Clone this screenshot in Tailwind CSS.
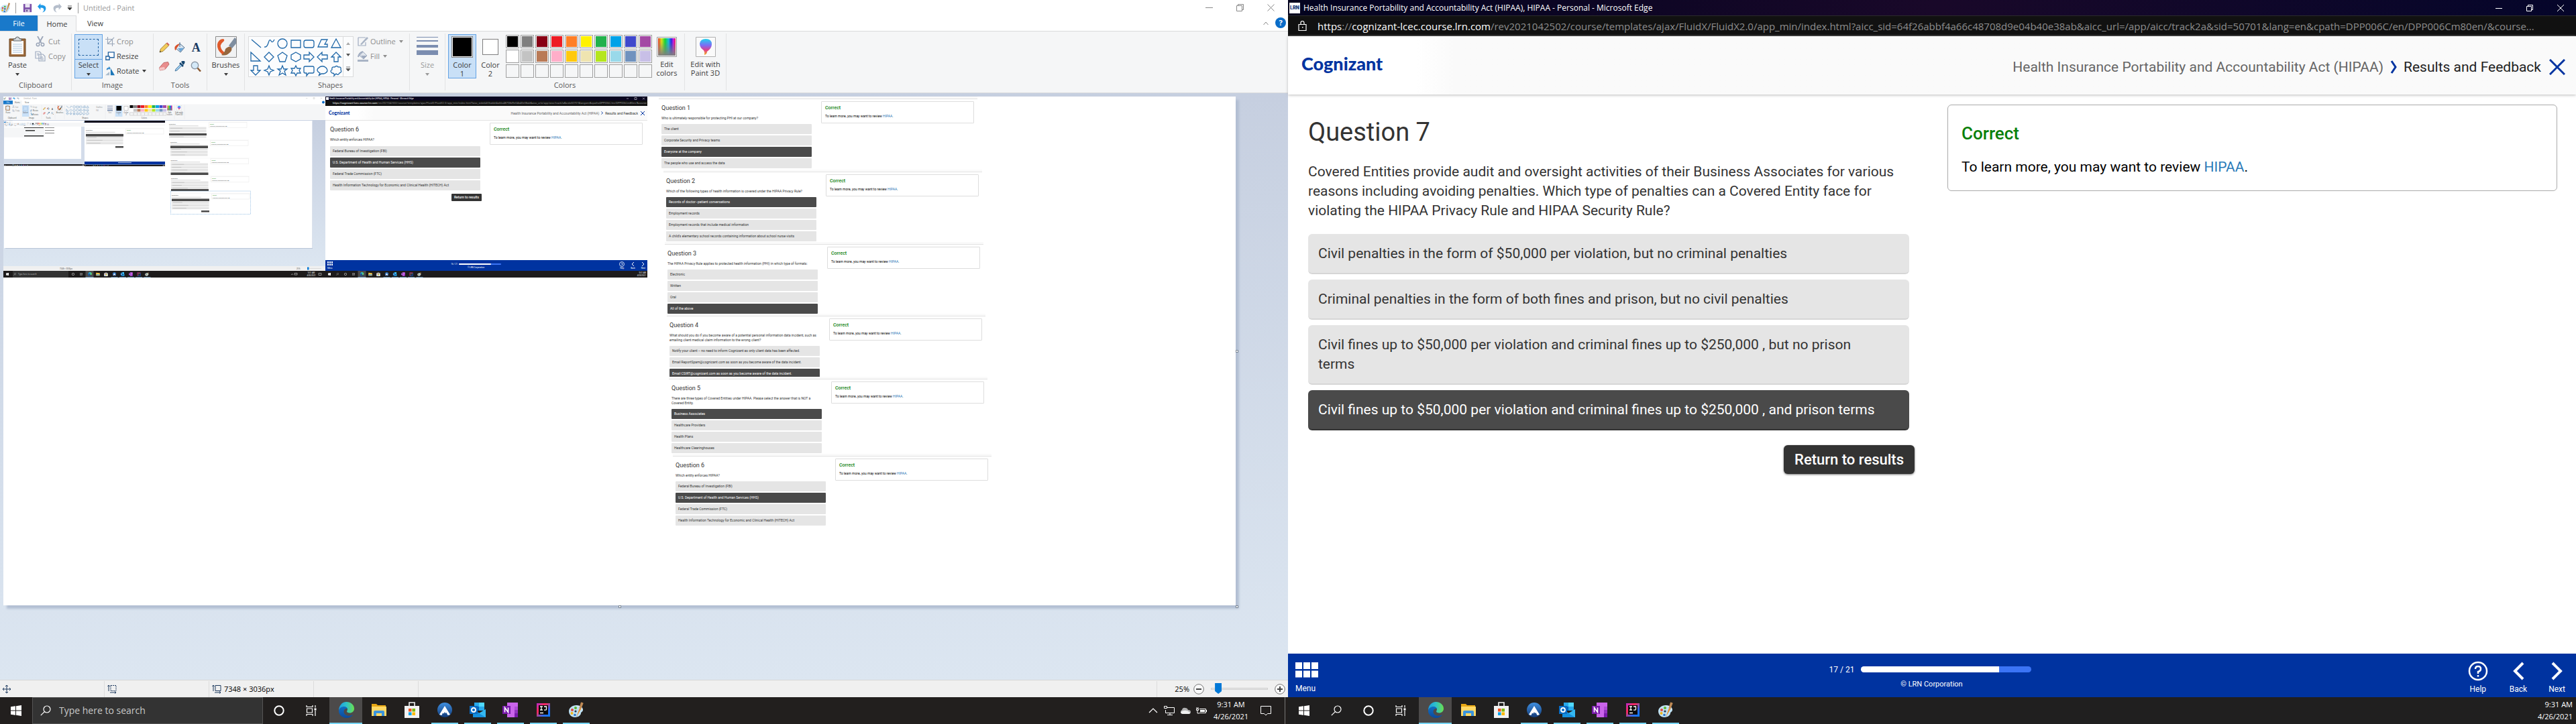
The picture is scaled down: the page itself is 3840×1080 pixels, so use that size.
<!DOCTYPE html>
<html lang="en">
<head>
<meta charset="utf-8">
<title>Desktop</title>
<script src="https://cdn.jsdelivr.net/npm/@tailwindcss/browser@4"></script>
</head>
<body class="flex h-screen min-h-[720px] overflow-hidden bg-white font-['Open_Sans',sans-serif] text-[11px] leading-4 text-[#3c3c3c]">

<!-- shared icons -->
<svg class="absolute h-0 w-0" aria-hidden="true">
  <defs>
    <linearGradient id="gEdge" x1="0" y1="0" x2="1" y2="0"><stop offset="0" stop-color="#1b9de2"/><stop offset=".5" stop-color="#2fc2c9"/><stop offset="1" stop-color="#6be04a"/></linearGradient>
    <linearGradient id="gEdge2" x1="0" y1="0" x2="0" y2="1"><stop offset="0" stop-color="#0f6fc4"/><stop offset="1" stop-color="#0d4a9b"/></linearGradient>
    <linearGradient id="gNord" x1="0" y1="0" x2="0" y2="1"><stop offset="0" stop-color="#3f8fe0"/><stop offset="1" stop-color="#123a78"/></linearGradient>
    <linearGradient id="gIj" x1="0" y1="0" x2="1" y2="1"><stop offset="0" stop-color="#b32bd0"/><stop offset=".35" stop-color="#fe2857"/><stop offset=".7" stop-color="#2a6cf5"/><stop offset="1" stop-color="#0a7cff"/></linearGradient>
    <linearGradient id="gRain" x1="0" y1="0" x2="1" y2="0"><stop offset="0" stop-color="#e0392a"/><stop offset=".2" stop-color="#d8e01c"/><stop offset=".4" stop-color="#17d436"/><stop offset=".6" stop-color="#17b8e0"/><stop offset=".75" stop-color="#2a2ae0"/><stop offset=".9" stop-color="#d81cd8"/><stop offset="1" stop-color="#e01c3a"/></linearGradient>
    <linearGradient id="gFade" x1="0" y1="0" x2="0" y2="1"><stop offset=".2" stop-color="#808080" stop-opacity="0"/><stop offset="1" stop-color="#808080"/></linearGradient>
    <linearGradient id="gDrop" x1="0" y1="0" x2="0" y2="1"><stop offset="0" stop-color="#22d3ee"/><stop offset=".4" stop-color="#7c6cf5"/><stop offset=".7" stop-color="#e0408a"/><stop offset="1" stop-color="#f5b51c"/></linearGradient>
    <linearGradient id="gBack" x1="0" y1="0" x2="0" y2="1"><stop offset="0" stop-color="#c6cfe0"/><stop offset="1" stop-color="#dce6f1"/></linearGradient>
    <symbol id="i-win" viewBox="0 0 16 16"><path d="M0 2.3 7 1.3v6.3H0zM8 1.2 16 0v7.6H8zM0 8.4h7v6.3L0 13.7zM8 8.4h8V16l-8-1.2z" fill="#fff"/></symbol>
    <symbol id="i-search" viewBox="0 0 16 16"><circle cx="10" cy="6" r="5" fill="none" stroke="#fff" stroke-width="1.2"/><path d="M6.4 9.6.8 15.2" stroke="#fff" stroke-width="1.2"/></symbol>
    <symbol id="i-cortana" viewBox="0 0 16 16"><circle cx="8" cy="8" r="6.7" fill="none" stroke="#fff" stroke-width="2"/></symbol>
    <symbol id="i-task" viewBox="0 0 16 16"><path d="M1 0v2.500h9V0M1 16v-2.500h9V16M1.500 5h8v6h-8zM14 0v3.500M14 8v8" fill="none" stroke="#fff" stroke-width="1.200"/><path d="M12.500 4.500h3v3h-3z" fill="#fff"/></symbol>
    <symbol id="i-edge" viewBox="0 0 24 24"><path d="M1 13C1 5.500 6 0 12.500 0 19 0 24 4.500 24 10c0 4-3 6.500-6.500 6.500-3 0-4.500-1.200-4.500-2.300 0-.9 1-1.300 1-3C14 9 12 7.500 9.300 7.500 5 7.500 2 10 1 13z" fill="url(#gEdge)"/><path d="M1 13c.5-3.500 4-6 8-6 2.500 0 4.500 1.500 4.800 3.200C11 9 8.500 11.500 8.500 14.500c0 4 4 6.500 8 6.300 2 0 4-.8 4.700-1.200.4-.2.7.1.400.5C19.700 22.500 16.500 24 13 24 6 24 .5 19 1 13z" fill="url(#gEdge2)"/></symbol>
    <symbol id="i-folder" viewBox="0 0 24 24"><path d="M1 3h7l2 2h12v4H1z" fill="#e8a713"/><path d="M1 7h22v14H1z" fill="#ffd866"/><path d="M4 21v-6q0-2 2-2h12q2 0 2 2v6h-4v-4H8v4z" fill="#3b94dd"/></symbol>
    <symbol id="i-store" viewBox="0 0 24 24"><path d="M8 7V1h8v6" fill="none" stroke="#f2f2f2" stroke-width="1.600"/><path d="M1 6h22v18H1z" fill="#f2f2f2"/><path d="M7 10h4.500v4.500H7z" fill="#f25022"/><path d="M12.500 10H17v4.500h-4.500z" fill="#7fba00"/><path d="M7 15.500h4.500V20H7z" fill="#00a4ef"/><path d="M12.500 15.500H17V20h-4.500z" fill="#ffb900"/></symbol>
    <symbol id="i-nord" viewBox="0 0 24 24"><circle cx="12" cy="12" r="11" fill="url(#gNord)"/><path d="M4 19 12 6l8 13-3.500 1-2-4-1.500 1-1-2-1.500 2.500-1.500-1-1.500 3.500z" fill="#fff"/></symbol>
    <symbol id="i-outlook" viewBox="0 0 24 24"><path d="M7 1h15v12H7z" fill="#28a8ea"/><path d="M14 1h8v6h-8z" fill="#50d9ff"/><path d="M7 7h7v6H7z" fill="#0364b8"/><path d="M5 11l10 6 9-6v12H5z" fill="#1490df"/><path d="m24 11-10 6 10 6z" fill="#35b8f1"/><path d="M0 6h12v12H0z" fill="#0a6cc4"/><circle cx="6" cy="12" r="3" fill="none" stroke="#fff" stroke-width="1.800"/></symbol>
    <symbol id="i-onenote" viewBox="0 0 24 24"><path d="M7 1h16v22H7z" fill="#ca64ea"/><path d="M18 7h5v5h-5z" fill="#ae4bd5"/><path d="M18 12h5v5h-5z" fill="#9332bf"/><path d="M18 17h5v6h-5z" fill="#7719aa"/><path d="M0 6h12v12H0z" fill="#7719aa"/><path d="M3.500 15.500v-7l5 7v-7" fill="none" stroke="#fff" stroke-width="1.600"/></symbol>
    <symbol id="i-ij" viewBox="0 0 24 24"><path d="M2 2h20v20H2z" fill="url(#gIj)"/><path d="M5 5h14v14H5z" fill="#0b0b0b"/><path d="M7 7h4M9 7v5M7 12h4M13 7h3.500v4q0 1.200-1.500 1.200h-2M7 16.500h5" stroke="#fff" stroke-width="1.300" fill="none"/></symbol>
    <symbol id="i-paint" viewBox="0 0 24 24"><path d="M12 5c6 0 10 3 10 7 0 3-3 3-3 5s-3 6-9 6C5 23 1 19 1 14S6 5 12 5z" fill="#bfe0f2"/><path d="M12 6c5 0 9 3 9 6" stroke="#e9f6fc" fill="none"/><circle cx="6" cy="12" r="2" fill="#e2463a"/><circle cx="11" cy="9" r="2" fill="#5cb531"/><circle cx="5.500" cy="17" r="2" fill="#f0b41c"/><circle cx="10" cy="19.500" r="1.800" fill="#2d74c9"/><circle cx="11" cy="14" r="1.600" fill="#1e3550"/><path d="m12 23 5-14 2.500 1z" fill="#e88926"/><path d="M16.500 9 19 .5q5 .5 3 3L19.500 10z" fill="#c08a55"/></symbol>
    <symbol id="i-caret" viewBox="0 0 8 5"><path d="M1 0h6L4 4z" fill="currentColor"/></symbol>
    <symbol id="i-save" viewBox="0 0 16 16"><path d="M1 1h14v14H1z" fill="#7c4fa8"/><path d="M4 1h8v6H4z" fill="#e9e4f2"/><path d="M4 10h8v5H4z" fill="#cfc6e0"/><path d="M6 11h2v3H6z" fill="#56357d"/></symbol>
    <symbol id="i-undo" viewBox="0 0 16 16"><path d="M5 0v3c6-.5 10 2 9 7-.6 3-3 5-6 5.500 2-1.500 3-3.300 2.700-5C10.300 8 8.500 7.200 5 7.500V11L0 5.500z" fill="currentColor"/></symbol>
    <symbol id="i-paste" viewBox="0 0 26 32"><path d="M1 4h24v26H1z" fill="#9c6a3c" stroke="#6d4623"/><path d="M4 7h18v20H4z" fill="#fff"/><path d="M6 12h14M6 15h14M6 18h14M6 21h14M6 24h14" stroke="#a9c3dc"/><path d="M7 7V4h3q0-3 3-3t3 3h3v3z" fill="#d4d8dc" stroke="#5d6368"/></symbol>
    <symbol id="i-cut" viewBox="0 0 16 16"><path d="M4 0 9.500 10M12 0 6.500 10" stroke="#9aa5b8" stroke-width="1.800"/><circle cx="4.500" cy="12.500" r="2.200" fill="none" stroke="#9aa5b8" stroke-width="1.500"/><circle cx="11.500" cy="12.500" r="2.200" fill="none" stroke="#9aa5b8" stroke-width="1.500"/></symbol>
    <symbol id="i-copy" viewBox="0 0 16 16"><path d="M1 1h6l2 2v8H1zM6 5h6l3 3v7H6z" fill="#f5f6f7" stroke="#9fabc0" stroke-width="1.200"/><path d="M3 4h3M3 6h3M8 9h4M8 11h5M8 13h5" stroke="#9fabc0"/></symbol>
    <symbol id="i-crop" viewBox="0 0 16 16"><path d="M4 0v12h12M0 4h12v12M4 12 15 1" fill="none" stroke="#9aa7b9" stroke-width="1.300"/></symbol>
    <symbol id="i-resize" viewBox="0 0 16 16"><path d="M5 1h10v9H5z" fill="#fff" stroke="#1e5f9e" stroke-width="1.500"/><path d="M1 8h6v6H1z" fill="#fff" stroke="#1e5f9e" stroke-width="1.500"/></symbol>
    <symbol id="i-rotate" viewBox="0 0 16 16"><path d="M9 3v12h7z" fill="#1b76b8"/><path d="M0 15h7V9z" fill="#a9bccd"/><path d="M2 6q0-4 4-4V0l3 3-3 3V4Q4 4 4 6z" fill="#2f86c8"/></symbol>
    <symbol id="i-pencil" viewBox="0 0 16 16"><path d="m1 15 1.500-5L11 1.500 14.500 5 6 13.500z" fill="#f3cc5a" stroke="#8b6a22" stroke-width=".8"/><path d="m11 1.500 1.300-1.200 3.400 3.400L14.500 5z" fill="#d55a55"/><path d="m1 15 .7-2.300L3.300 14.300z" fill="#333"/></symbol>
    <symbol id="i-bucket" viewBox="0 0 16 16"><path d="m8 2 7 6-6 7-7-6z" fill="#dce8f2" stroke="#4d6d8c"/><path d="m5 9 9-.5L9 14z" fill="#6aa6d8"/><path d="M8 2Q3 3 .5 7q-.5 5 1.500 5 1.500-4 3-5.500z" fill="#d9532b"/><path d="M8 0v7" stroke="#4d6d8c"/></symbol>
    <symbol id="i-eraser" viewBox="0 0 16 16"><path d="M7 2.500 13.500 1.500 15 5 9 12.500l-7.500 1.500-1-4z" fill="#ea8d8d" stroke="#b25a5a" stroke-width=".8"/><path d="m.5 10 7.500-1 1 3.500-7.500 1.500z" fill="#f7c6c6"/></symbol>
    <symbol id="i-dropper" viewBox="0 0 16 16"><path d="M10 1q4-3 5.500 0 .5 3-2.500 5z" fill="#17466f"/><path d="m8 3 5 5" stroke="#17466f" stroke-width="2.500"/><path d="M9 5 2 12l-1 3 3-1 7-7z" fill="#9cc9ea" stroke="#3b6c94" stroke-width=".8"/></symbol>
    <symbol id="i-mag" viewBox="0 0 16 16"><circle cx="6.500" cy="6.500" r="5.200" fill="#d4e9f8" stroke="#8d99a6" stroke-width="1.400"/><path d="m10.500 10.500 4.500 5" stroke="#8a5b34" stroke-width="2.500"/></symbol>
    <symbol id="i-brush" viewBox="0 0 32 32"><path d="M.5.5h31v31H.5z" fill="#f1f2f3" stroke="#8b8b8b"/><path d="M10 27Q2 20 3 12 5 4 12 4q3 2-1 5-5 4-2 10 3 5 6 5l-1 4z" fill="#df5a2b"/><path d="M15 19q5-5 9-3 2 5-3 9-5 5-12 3 5-3 6-9z" fill="#96673e"/><path d="m20 14 9-12 2 2v7l-6 7z" fill="#7f8ea0"/></symbol>
    <symbol id="i-outline" viewBox="0 0 16 16"><path d="M1 2h11M1 2v12h11V9" fill="none" stroke="#9fabc0" stroke-width="1.200"/><path d="M4 12 14 1l2 2L6 13z" fill="#a9b4c5"/></symbol>
    <symbol id="i-fill" viewBox="0 0 16 16"><path d="M0 13h16v3H0z" fill="#a9b4c5"/><path d="m8 1 6 6-5 5-6-5z" fill="#e0e5ec" stroke="#9fabc0"/><path d="m5 7 9 0-5 5z" fill="#9fabc0"/><path d="M8 1Q2 3 1 9" stroke="#9fabc0" stroke-width="2" fill="none"/></symbol>
    <symbol id="i-shapes" viewBox="0 0 140 60"><g fill="none" stroke="#1e67a8" stroke-width="1.300">
      <path d="m4 4 14 12M23 15q4 1 6-6t4-3 5-2"/><circle cx="50" cy="10" r="7"/><path d="M63 5h14v11H63z"/><rect x="82" y="5" width="15" height="11" rx="3"/><path d="M103 15h14v-4h-4l4-7h-9zM123 16l7-13 7 13z"/>
      <path d="M3 23v13h14zM30 23l7 7-7 7-7-7zM50 23l7 5-3 9h-8l-3-9zM70 23l7 4v6l-7 4-7-4v-6zM82 27h8v-4l7 7-7 7v-4h-8zM117 27h-8v-4l-7 7 7 7v-4h8zM127 37v-7h-4l7-7 7 7h-4v7z"/>
      <path d="M7 43v7H3l7 7 7-7h-4v-7zM30 43l2 5 5 2-5 2-2 5-2-5-5-2 5-2zM50 43l2 5h5l-4 3 2 6-5-3-5 3 2-6-4-3h5zM70 43l2 4h5l-2 3 2 4h-5l-2 4-2-4h-5l2-4-2-3h5zM84 44h11q2 0 2 2v6q0 2-2 2h-6l-3 4v-4h-2q-2 0-2-2v-6q0-2 2-2z"/>
      <path d="M106 54q-6-3-3-7 6-6 12-1 5 6-3 9l-4 0-4 3zM124 54q-4-3 0-5-1-5 4-4 3-3 5 0 5-1 4 4 2 4-2 5-2 4-5 1l-3 3q1-4-3-4z"/></g></symbol>
    <symbol id="i-rainbow" viewBox="0 0 30 30"><path d="M.5.5h29v29H.5z" fill="#fff" stroke="#9a9a9a"/><path d="M2 2h26v26H2z" fill="url(#gRain)"/><path d="M2 2h26v26H2z" fill="url(#gFade)"/></symbol>
    <symbol id="i-p3d" viewBox="0 0 30 30"><path d="M.5.5h29v29H.5z" fill="#fafafa" stroke="#b0b0b0"/><path d="M15 3q9 0 9 8 0 6-7 11 0 4-4 5 1-4-1-7-6-4-6-10 1-7 9-7z" fill="url(#gDrop)"/></symbol>

    <!-- pasted Paint window, quarter size -->
    <symbol id="s-ribbon" viewBox="0 0 480 35">
      <path d="M0 0h480v35H0z" fill="#fff"/><path d="M0 11.500h480v23H0z" fill="#f5f6f7"/><path d="M0 6h14v5.500H0z" fill="#1979ca"/><path d="M14 6h14v6H14z" fill="#f5f6f7"/>
      <use href="#i-paint" width="4" height="4" x="0" y="1"/><use href="#i-save" x="8" y="1" width="4" height="4"/><use href="#i-undo" x="14" y="1" width="4" height="4" color="#2094e0"/><use href="#i-undo" x="20" y="1" width="4" height="4" color="#a9b4c5"/>
      <path d="M28 13h10.500v17H28zM167 13h10.500v17H167z" fill="#c9e0f7"/><path d="M30 15h6v6h-6z" fill="none" stroke="#5b8fc5" stroke-width=".4" stroke-dasharray="1 .5"/>
      <use href="#i-paste" x="3" y="13" width="7" height="8"/><use href="#i-cut" x="13" y="13" width="4" height="4"/><use href="#i-copy" x="13" y="19" width="4" height="4"/><use href="#i-crop" x="40" y="13" width="3" height="4"/><use href="#i-resize" x="40" y="19" width="3" height="4"/><use href="#i-rotate" x="40" y="24" width="4" height="4"/>
      <use href="#i-pencil" x="59" y="16" width="4" height="4"/><use href="#i-bucket" x="65" y="16" width="4" height="4"/><use href="#i-eraser" x="59" y="23" width="4" height="4"/><use href="#i-dropper" x="65" y="23" width="4" height="4"/><use href="#i-mag" x="71" y="23" width="4" height="4"/><use href="#i-brush" x="80" y="13" width="8" height="8"/><use href="#i-shapes" x="93" y="13" width="35" height="15"/>
      <path d="M155 14h8M155 16h8" stroke="#7b8db0" stroke-width=".7"/><path d="M155 18h8v1h-8zM155 20h8v1.500h-8z" fill="#7b8db0"/>
      <path d="M168.500 14h7.500v7h-7.500z"/><path d="M180 14.500h6v6h-6z" fill="#fff" stroke="#888" stroke-width=".4"/>
      <path d="M188.500 13h5v4h-5z"/><path d="M194 13h5v4h-5z" fill="#7f7f7f"/><path d="M199.500 13h5v4h-5z" fill="#880015"/><path d="M205 13h5v4h-5z" fill="#ed1c24"/><path d="M210.500 13h5v4h-5z" fill="#ff7f27"/><path d="M216 13h5v4h-5z" fill="#fff200"/><path d="M221.500 13h5v4h-5z" fill="#22b14c"/><path d="M227 13h5v4h-5z" fill="#00a2e8"/><path d="M232.500 13h5v4h-5z" fill="#3f48cc"/><path d="M238 13h5v4h-5z" fill="#a349a4"/>
      <path d="M188.500 18.500h5v4h-5z" fill="#fff"/><path d="M194 18.500h5v4h-5z" fill="#c3c3c3"/><path d="M199.500 18.500h5v4h-5z" fill="#b97a57"/><path d="M205 18.500h5v4h-5z" fill="#ffaec9"/><path d="M210.500 18.500h5v4h-5z" fill="#ffc90e"/><path d="M216 18.500h5v4h-5z" fill="#efe4b0"/><path d="M221.500 18.500h5v4h-5z" fill="#b5e61d"/><path d="M227 18.500h5v4h-5z" fill="#99d9ea"/><path d="M232.500 18.500h5v4h-5z" fill="#7092be"/><path d="M238 18.500h5v4h-5z" fill="#c8bfe7"/>
      <path d="M188.500 24h54.500v4h-54.500zM194 24v4M199.500 24v4M205 24v4M210.500 24v4M216 24v4M221.500 24v4M227 24v4M232.500 24v4M238 24v4" fill="none" stroke="#aaa" stroke-width=".4"/>
      <use href="#i-rainbow" x="244" y="13" width="8" height="8"/><use href="#i-p3d" x="258" y="13" width="8" height="8"/>
      <path d="M26.500 12.500v21M57 12.500v21M77 12.500v21M91 12.500v21M152 12.500v21M166 12.500v21M255 12.500v21M270 12.500v21" stroke="#dcdee0" stroke-width=".3"/>
      <path d="M451 2.500h2.500M462 1.500h2v2h-2zM473 1.500l2 2M475 1.500l-2 2" fill="none" stroke="#999" stroke-width=".3"/><circle cx="477" cy="8.500" r="2" fill="#0a6cc8"/>
      <g font-family="Open Sans, sans-serif" font-size="2.800" fill="#444" text-anchor="middle"><text x="40" y="3.800" fill="#999">Untitled - Paint</text><text x="7" y="9.600" fill="#fff">File</text><text x="21" y="9.600">Home</text><text x="35" y="9.600">View</text><text x="7" y="25">Paste</text><text x="20" y="16.500" fill="#888">Cut</text><text x="21" y="22" fill="#888">Copy</text><text x="33" y="25">Select</text><text x="47" y="16.500" fill="#888">Crop</text><text x="48" y="22">Resize</text><text x="48" y="27.500">Rotate</text><text x="73" y="19.500" font-weight="bold">A</text><text x="84" y="25">Brushes</text><text x="143" y="16.500" fill="#888">Outline</text><text x="140" y="22" fill="#888">Fill</text><text x="159" y="25" fill="#999">Size</text><text x="172" y="25">Color</text><text x="172" y="28.300">1</text><text x="183" y="25">Color</text><text x="183" y="28.300">2</text><text x="248" y="25">Edit</text><text x="248" y="28.300">colors</text><text x="262" y="25">Edit with</text><text x="262" y="28.300">Paint 3D</text><text x="13" y="33">Clipboard</text><text x="42" y="33">Image</text><text x="67" y="33">Tools</text><text x="122" y="33">Shapes</text><text x="210" y="33">Colors</text></g>
    </symbol>
    <symbol id="s-task" viewBox="0 0 480 10"><path d="M0 0h480v10H0z" fill="#1d1b1b"/><use href="#i-win" x="4" y="3" width="4" height="4"/><use href="#i-search" x="16" y="3" width="4" height="4"/><use href="#i-cortana" x="28" y="3" width="4" height="4"/><use href="#i-task" x="40" y="3" width="4" height="4"/><path d="M48.500 0h12v9.500h-12z" fill="#4c4a4a"/><use href="#i-edge" x="51.500" y="2" width="6" height="6"/><use href="#i-folder" x="64" y="2" width="6" height="6"/><use href="#i-store" x="76" y="2" width="6" height="6"/><use href="#i-nord" x="88.500" y="2" width="6" height="6"/><use href="#i-outlook" x="100.500" y="2" width="6" height="6"/><use href="#i-onenote" x="113" y="2" width="6" height="6"/><use href="#i-ij" x="125" y="2" width="6" height="6"/><use href="#i-paint" x="137" y="2" width="6" height="6"/><path d="M48.500 9.500h12M86.500 9.500h10M99 9.500h10M111 9.500h10M123 9.500h10M135.500 9.500h10" stroke="#76b9ed" stroke-width=".6"/><g font-family="Open Sans, sans-serif" font-size="2.800" fill="#fff" text-anchor="end"><text x="478" y="4">9:31 AM</text><text x="478" y="8">4/26/2021</text></g></symbol>
    <symbol id="s-q" viewBox="0 0 120 26"><path d="M0 .2h119" stroke="#eee" stroke-width=".5"/><path d="M1 8h56v3.500H1zM1 12.300h56v3.500H1zM1 16.600h56v3.500H1zM1 20.900h56v3.500H1z" fill="#e5e5e5"/><path d="M61 1h57v8H61z" fill="#fff" stroke="#ddd" stroke-width=".4"/><path d="M3 9.700h18M3 14h14M3 18.300h23M3 22.600h20M1 6.200h44" stroke="#aaa" stroke-width=".5"/><g font-family="Roboto, sans-serif"><text x="1" y="4.400" font-size="2.500" fill="#444">Question</text><text x="62.500" y="4.400" font-size="1.800" fill="#0a800a">Correct</text><text x="62.500" y="7.600" font-size="1.300" fill="#333">To learn more, you may want to review HIPAA.</text></g></symbol>
  </defs>
</svg>

<!-- left screen: Paint -->
<main class="flex min-w-0 flex-1 flex-col bg-white">
  <header class="flex h-[23px] shrink-0 items-center text-[#999]">
    <svg class="h-4 w-4"><use href="#i-paint"/></svg>
    <span class="ml-[7px] h-4 w-px bg-[#999]"></span>
    <button aria-label="Save" class="ml-2.5"><svg class="h-[14px] w-[14px]"><use href="#i-save"/></svg></button>
    <button aria-label="Undo" class="ml-2 text-[#1f9ae8]"><svg class="h-[14px] w-[14px]"><use href="#i-undo"/></svg></button>
    <button aria-label="Redo" class="ml-2 -scale-x-100 text-[#b5becb]"><svg class="h-[14px] w-[14px]"><use href="#i-undo"/></svg></button>
    <svg class="ml-2 h-2 w-2" viewBox="0 0 8 8"><path d="M1 1h6M1 3.500h6L4 7z" fill="#333" stroke="#333" stroke-width=".8"/></svg>
    <span class="ml-2 h-4 w-px bg-[#999]"></span>
    <h1 class="ml-[7px] flex-1">Untitled - Paint</h1>
    <div class="flex items-center gap-[35px] pr-5">
      <button aria-label="Minimize"><svg class="h-[11px] w-[11px]" viewBox="0 0 11 11"><path d="M0 5.500h11" stroke="#888"/></svg></button>
      <button aria-label="Restore"><svg class="h-[11px] w-[11px]" viewBox="0 0 11 11"><path d="M.5 2.500h8v8h-8zM2.500 2V.5h8v8H9" fill="none" stroke="#888"/></svg></button>
      <button aria-label="Close"><svg class="h-[11px] w-[11px]" viewBox="0 0 11 11"><path d="m.5.500 10 10m0-10-10 10" stroke="#888"/></svg></button>
    </div>
  </header>
  <nav class="flex h-6 shrink-0 items-stretch border-b border-[#dadbdc]">
    <button class="w-14 bg-[#1979ca] text-white">File</button>
    <button class="-mb-px w-[58px] border border-b-0 border-[#dadbdc] bg-[#f5f6f7]">Home</button>
    <button class="w-14">View</button>
    <span class="flex-1"></span>
    <button aria-label="Collapse the ribbon" class="mr-2.5"><svg class="h-2 w-2" viewBox="0 0 8 8"><path d="m.5 6 3.500-4 3.500 4" fill="none" stroke="#888"/></svg></button>
    <button aria-label="Help" class="mr-[3px] mt-[3px] h-4 w-4 rounded-full bg-[#0a6cc8] font-bold text-white">?</button>
  </nav>

  <section aria-label="Ribbon" class="flex h-[92px] shrink-0 border-b border-[#dadbdc] bg-[#f5f6f7] py-[3px] text-center">
    <div class="flex w-[107px] flex-col border-r border-[#e2e3e4] pt-px">
      <div class="flex flex-1">
        <button class="flex w-[52px] flex-col items-center pt-[3px]"><svg class="h-8 w-[26px]"><use href="#i-paste"/></svg><span class="mt-[3px]">Paste</span><svg class="mt-1 h-[5px] w-2"><use href="#i-caret"/></svg></button>
        <div class="flex flex-col gap-1.5 pt-[3px] text-[#8d8d8d]">
          <button class="flex items-center gap-1"><svg class="h-4 w-4"><use href="#i-cut"/></svg>Cut</button>
          <button class="flex items-center gap-1"><svg class="h-4 w-4"><use href="#i-copy"/></svg>Copy</button>
        </div>
      </div>
      <span class="text-[#5a5a5a]">Clipboard</span>
    </div>
    <div class="flex w-[122px] flex-col border-r border-[#e2e3e4] pt-px">
      <div class="flex flex-1">
        <button class="ml-1 flex h-[66px] w-[42px] flex-col items-center border border-[#62a2e4] bg-[#c9e0f7]"><span class="flex h-[37px] w-full items-center justify-center border-b border-[#62a2e4]"><span class="h-[25px] w-[30px] border border-dashed border-[#1e5f9e]"></span></span><span>Select</span><svg class="mt-1 h-[5px] w-2"><use href="#i-caret"/></svg></button>
        <div class="flex flex-col gap-1.5 pl-1 pt-[3px]">
          <button class="flex items-center gap-[3px] text-[#8d8d8d]"><svg class="h-3.5 w-3.5"><use href="#i-crop"/></svg>Crop</button>
          <button class="flex items-center gap-[3px]"><svg class="h-3.5 w-3.5"><use href="#i-resize"/></svg>Resize</button>
          <button class="flex items-center gap-[3px]"><svg class="h-3.5 w-3.5"><use href="#i-rotate"/></svg>Rotate<svg class="h-[5px] w-2"><use href="#i-caret"/></svg></button>
        </div>
      </div>
      <span class="text-[#5a5a5a]">Image</span>
    </div>
    <div class="flex w-20 flex-col border-r border-[#e2e3e4] pt-px">
      <div class="grid flex-1 grid-cols-3 content-start justify-items-center gap-y-3 px-1 pt-3">
        <button aria-label="Pencil"><svg class="h-4 w-4"><use href="#i-pencil"/></svg></button>
        <button aria-label="Fill with color"><svg class="h-4 w-4"><use href="#i-bucket"/></svg></button>
        <button aria-label="Text" class="font-['Liberation_Serif',serif] text-lg leading-4 font-bold text-[#1b3c63]">A</button>
        <button aria-label="Eraser"><svg class="h-4 w-4"><use href="#i-eraser"/></svg></button>
        <button aria-label="Color picker"><svg class="h-4 w-4"><use href="#i-dropper"/></svg></button>
        <button aria-label="Magnifier"><svg class="h-4 w-4"><use href="#i-mag"/></svg></button>
      </div>
      <span class="text-[#5a5a5a]">Tools</span>
    </div>
    <button class="flex w-14 flex-col items-center border-r border-[#e2e3e4] pt-1"><svg class="h-8 w-8"><use href="#i-brush"/></svg><span class="mt-[3px]">Brushes</span><svg class="mt-1 h-[5px] w-2"><use href="#i-caret"/></svg></button>
    <div class="flex w-[246px] flex-col border-r border-[#e2e3e4] pt-px">
      <div class="flex flex-1">
        <div class="ml-[5px] mt-[3px] flex h-[61px] w-[157px] border border-[#dadbdc] bg-[#fbfcfd]">
          <svg class="h-[60px] w-[140px]" role="img" aria-label="Shape gallery"><use href="#i-shapes"/></svg>
          <div class="flex flex-1 flex-col items-center justify-around border-l border-[#dadbdc] text-[#555]"><svg class="h-[5px] w-2 rotate-180 text-[#aaa]"><use href="#i-caret"/></svg><svg class="h-[5px] w-2"><use href="#i-caret"/></svg><svg class="h-2 w-2" viewBox="0 0 8 8"><path d="M1 1h6M1 3.500h6L4 7z" fill="#555" stroke="#555" stroke-width=".8"/></svg></div>
        </div>
        <div class="flex flex-col gap-1.5 pl-1.5 pt-[3px] text-[#8d8d8d]">
          <button class="flex items-center gap-[3px]"><svg class="h-4 w-4"><use href="#i-outline"/></svg>Outline<svg class="ml-px h-[5px] w-2"><use href="#i-caret"/></svg></button>
          <button class="flex items-center gap-[3px]"><svg class="h-4 w-4"><use href="#i-fill"/></svg>Fill<svg class="ml-px h-[5px] w-2"><use href="#i-caret"/></svg></button>
        </div>
      </div>
      <span class="pl-2.5 text-[#5a5a5a]">Shapes</span>
    </div>
    <button class="flex w-[53px] flex-col items-center border-r border-[#e2e3e4] pt-1 text-[#999]"><svg class="h-8 w-8" viewBox="0 0 32 32"><path d="M0 1h32v1H0zM0 6h32v2H0zM0 13h32v4H0zM0 21h32v7H0z" fill="#7b8db0"/></svg><span class="mt-[3px]">Size</span><svg class="mt-1 h-[5px] w-2"><use href="#i-caret"/></svg></button>
    <div class="flex w-[357px] flex-col border-r border-[#e2e3e4] pt-px">
      <div class="flex flex-1 leading-[13px]">
        <button class="ml-1 flex h-[66px] w-[42px] flex-col items-center border border-[#62a2e4] bg-[#c9e0f7] pt-0.5"><span class="mb-1 h-8 w-8 border border-[#7f7f7f] bg-black ring-1 ring-white ring-inset"></span>Color<br>1</button>
        <button class="flex h-[66px] w-[42px] flex-col items-center pt-[7px]"><span class="mb-2 h-6 w-6 border border-[#7f7f7f] bg-white"></span>Color<br>2</button>
        <div id="palette" class="ml-0.5 grid h-16 grid-cols-10 gap-0.5 pt-px"></div>
        <button class="ml-1.5 flex w-8 flex-col items-center pt-1"><svg class="mb-1 h-[30px] w-[30px] shrink-0"><use href="#i-rainbow"/></svg>Edit<br>colors</button>
      </div>
      <span class="text-[#5a5a5a]">Colors</span>
    </div>
    <button class="flex w-[62px] flex-col items-center border-r border-[#e2e3e4] pt-[5px] leading-[13px]"><svg class="mb-1 h-[30px] w-[30px]"><use href="#i-p3d"/></svg>Edit with<br>Paint 3D</button>
  </section>

  <!-- drawing surface: pasted pictures lie on it at free positions -->
  <section aria-label="Canvas" class="min-h-0 flex-1 overflow-hidden bg-linear-to-b from-[#c6cfe0] to-[#dce6f1] pt-[5px] pl-[5px]">
    <div class="relative h-[759px] w-[1837px] bg-white font-['Roboto',sans-serif] text-[#333] shadow-[5px_5px_3px_0_#b3bfd3]">
      <!-- pasted left desktop -->
      <svg class="absolute top-0 left-0 h-[270px] w-[480px]" viewBox="0 0 480 270">
        <path d="M0 35h480v218H0z" fill="url(#gBack)"/>
        <use href="#s-ribbon" width="480" height="35"/>
        <path d="M3 37h458v190H3z" fill="#b9c5d8"/><path d="M1 36h459.500v190H1z" fill="#fff"/>
        <use href="#s-ribbon" x="1" y="36" width="120" height="9"/>
        <path d="M1 45h120v57H1z" fill="#d3dcea"/><path d="M1 45h115v48H1z" fill="#fff"/><path d="M1 46h60v15H1z" fill="#f5f6f7"/><path d="M31 46h29v1H31zM31 58h29v1.500H31zM33 50h14v1.500H33z" fill="#333"/><path d="M62 46h14v1H62zM62 50h14v1H62zM62 54h14v1H62z" fill="#888"/>
        <use href="#s-task" x="1" y="101" width="120" height="2.500"/>
        <path d="M121 36h120v3H121z" fill="#0c0a1c"/><path d="M121 39h120v5H121z" fill="#fafafa"/>
        <use href="#s-q" x="122" y="44" width="119" height="32"/><path d="M123 56h56v3.500h-56zM167 74h12v2.500h-12z" fill="#4a4a4a"/>
        <path d="M121 97h120v4.500H121z" fill="#0033a0"/><path d="M171 98.700h20" stroke="#fff" stroke-width=".8"/>
        <use href="#s-task" x="121" y="101.500" width="120" height="2.500"/>
        <use href="#s-q" x="246" y="37" width="119" height="27"/><path d="M247 55h56v3h-56z" fill="#4a4a4a"/>
        <use href="#s-q" x="248" y="64" width="119" height="27"/><path d="M249 73.500h56v3.500h-56z" fill="#4a4a4a"/>
        <use href="#s-q" x="248.500" y="91" width="119" height="27"/><path d="M249.500 113.500h56v3.500h-56z" fill="#4a4a4a"/>
        <use href="#s-q" x="249" y="118" width="119" height="27"/><path d="M250 138h56v3h-56z" fill="#4a4a4a"/>
        <path d="M249.500 141h119v34.500h-119z" fill="#fff" stroke="#5b9bd5" stroke-width=".6" stroke-dasharray="1 1"/>
        <use href="#s-q" x="250" y="141.500" width="119" height="31"/><path d="M251 152.500h56v3.500h-56zM295 170h12v2.500h-12z" fill="#4a4a4a"/>
        <path d="M0 253h480v7H0z" fill="#f0f0f0"/><g font-family="Open Sans, sans-serif" font-size="2.800" fill="#444"><text x="84" y="257.500">7348 × 3036px</text><text x="437" y="257.500">25%</text></g><path d="M456 256.500h18" stroke="#ccc" stroke-width=".6"/><path d="M453 254.500h2.500v4H453z" fill="#0078d7"/>
        <path d="M0 260h480v10H0z" fill="#1d1b1b"/><path d="M14 260h83v10H14z" fill="#333"/><text x="22" y="266" font-family="Open Sans, sans-serif" font-size="3" fill="#ccc">Type here to search</text><use href="#i-win" x="4" y="263" width="4" height="4"/><use href="#i-search" x="15" y="263" width="4" height="4"/>
        <use href="#i-cortana" x="102" y="263" width="4" height="4"/><use href="#i-task" x="114" y="263" width="4" height="4"/><path d="M122.500 260h12v9.500h-12z" fill="#4c4a4a"/><use href="#i-edge" x="126" y="262" width="6" height="6"/><use href="#i-folder" x="138" y="262" width="6" height="6"/><use href="#i-store" x="150" y="262" width="6" height="6"/><use href="#i-nord" x="162.500" y="262" width="6" height="6"/><use href="#i-outlook" x="174.500" y="262" width="6" height="6"/><use href="#i-onenote" x="187" y="262" width="6" height="6"/><use href="#i-ij" x="199" y="262" width="6" height="6"/><use href="#i-paint" x="211" y="262" width="6" height="6"/><path d="M122.500 269.500h12M160.500 269.500h10M173 269.500h10M185 269.500h10M197 269.500h10M209.500 269.500h10" stroke="#76b9ed" stroke-width=".6"/>
        <g font-family="Open Sans, sans-serif" font-size="2.800" fill="#fff" text-anchor="middle"><text x="459" y="264">9:31 AM</text><text x="459" y="268">4/26/2021</text></g><path d="M429 266l1.500-1.500 1.500 1.500M434 263.500h4v2.500h-4zM470 263.500h4v3h-4z" fill="none" stroke="#fff" stroke-width=".5"/>
      </svg>

      <!-- pasted right desktop -->
      <article class="absolute top-0 left-[480px] flex h-[270px] w-[480px] flex-col bg-white">
        <div class="flex h-1.5 items-center gap-px bg-[#09051f] pl-px text-[3px] leading-[5px] text-white"><span class="h-1 w-1 bg-white"></span><span class="flex-1">Health Insurance Portability and Accountability Act (HIPAA), HIPAA - Personal - Microsoft Edge</span><svg class="h-1 w-8" viewBox="0 0 32 4"><path d="M1 2h3M13 .5h3v3h-3zM25 .5l3 3m0-3-3 3" fill="none" stroke="#fff" stroke-width=".5"/></svg></div>
        <div class="h-2 bg-[#111] pl-[11px] text-[4px] leading-[8px] whitespace-nowrap text-[#8d8d8d]"><span class="text-white">https://cognizant-lcec.course.lrn.com</span>/rev2021042502/course/templates/ajax/FluidX/FluidX2.0/app_min/index.html?aicc_sid=64f26abbf4a66c48708d9e04b40e38ab&amp;aicc_url=/app/aicc/track2a&amp;sid=50701&amp;lang=en&amp;cpath=DPP006C/en/DPP006Cm80en/&amp;course...</div>
        <div class="flex h-[22px] items-center border-b border-[#e2e2e2] bg-linear-to-r from-white from-10% to-[#fafafa] to-15% pr-1 pl-[5px] text-[5px] leading-[6px]"><span class="flex-1 font-['Lato',sans-serif] text-[7px] leading-[9px] font-black text-[#0033a0]">Cognizant</span><span class="text-[#666]">Health Insurance Portability and Accountability Act (HIPAA)</span><svg class="mx-[3px] h-[5px] w-[3px]" viewBox="0 0 3 5"><path d="m.5.500 2 2-2 2" fill="none" stroke="#0033a0"/></svg><span>Results and Feedback</span><svg class="ml-1 h-1.5 w-1.5" viewBox="0 0 6 6"><path d="m0 0 6 6m0-6-6 6" stroke="#0033a0"/></svg></div>
        <div class="flex flex-1 items-start px-[7px]">
          <div class="flex w-[224px] flex-col pt-2 text-[5px] leading-[7px]"><h3 class="text-[9px] leading-[10px]">Question 6</h3><p class="mt-[7px]">Which entity enforces HIPAA?</p>
            <div class="mt-1.5 flex flex-col gap-0.5"><p class="rounded-[1px] bg-[#e5e5e5] px-1 py-1">Federal Bureau of Investigation (FBI)</p><p class="rounded-[1px] bg-[#4a4a4a] px-1 py-1 text-white">U.S. Department of Health and Human Services (HHS)</p><p class="rounded-[1px] bg-[#e5e5e5] px-1 py-1">Federal Trade Commission (FTC)</p><p class="rounded-[1px] bg-[#e5e5e5] px-1 py-1">Health Information Technology for Economic and Clinical Health (HITECH) Act</p></div>
            <p class="-mr-0.5 mt-[5px] self-end rounded-[1px] bg-[#333] px-1 py-0.5 font-medium text-white">Return to results</p></div>
          <div class="mt-[3px] ml-[14px] h-[33px] w-[228px] rounded-[1px] border border-[#ddd] px-[5px] pt-[5px] text-[5px] leading-[7px] text-black"><h4 class="text-[7px] leading-[9px] font-medium text-[#0a800a]">Correct</h4><p class="mt-1">To learn more, you may want to review <span class="text-[#2a7ab8]">HIPAA</span>.</p></div>
        </div>
        <div class="flex h-4 items-center justify-between bg-[#0033a0] px-[3px] text-[3px] leading-[4px] text-white">
          <div><svg class="h-1.5 w-2" viewBox="0 0 8 6"><path d="M0 0h2v2.500H0zM3 0h2v2.500H3zM6 0h2v2.500H6zM0 3.500h2V6H0zM3 3.500h2V6H3zM6 3.500h2V6H6z" fill="#fff"/></svg><p class="mt-0.5">Menu</p></div>
          <div class="flex flex-col items-center"><div class="flex items-center gap-0.5">16 / 21<span class="flex h-0.5 w-[63px] rounded bg-[#3b74f5]"><span class="w-12 rounded bg-white"></span></span></div><p class="mt-px">© LRN Corporation</p></div>
          <div class="flex gap-[9px] text-center"><div><svg class="h-2 w-2" viewBox="0 0 8 8"><circle cx="4" cy="4" r="3.500" fill="none" stroke="#fff" stroke-width=".8"/><path d="M3 3q1-1.500 2 0T4 4.700V6" fill="none" stroke="#fff" stroke-width=".7"/></svg><p>Help</p></div><div><svg class="h-2 w-1.5" viewBox="0 0 6 8"><path d="M5 1 2 4l3 3" fill="none" stroke="#fff"/></svg><p>Back</p></div><div><svg class="h-2 w-1.5" viewBox="0 0 6 8"><path d="m1 1 3 3-3 3" fill="none" stroke="#fff"/></svg><p>Next</p></div></div>
        </div>
        <svg class="h-[10px] w-[480px] shrink-0"><use href="#s-task"/></svg>
      </article>

      <div id="pasted"></div>

      <span class="absolute top-[378px] -right-1 h-1 w-1 border border-[#7b8796] bg-white"></span>
      <span class="absolute -right-1 -bottom-1 h-1 w-1 border border-[#7b8796] bg-white"></span>
      <span class="absolute -bottom-1 left-[917px] h-1 w-1 border border-[#7b8796] bg-white"></span>
    </div>
  </section>

  <footer class="flex h-[26px] shrink-0 items-center border-t border-[#d7d7d7] bg-[#f0f0f0] text-black">
    <div class="flex h-6 w-[156px] items-center border-r border-[#dcdcdc] pl-1"><svg class="h-3 w-3" viewBox="0 0 12 12"><path d="M6 0v12M0 6h12M4 2l2-2 2 2M4 10l2 2 2-2M2 4 0 6l2 2M10 4l2 2-2 2" fill="none" stroke="#1f3a5f"/></svg></div>
    <div class="flex h-6 w-[156px] items-center border-r border-[#dcdcdc] pl-1"><svg class="h-3.5 w-3.5" viewBox="0 0 14 14"><path d="M5 1.500h8v8H5z" fill="none" stroke="#1f3a5f" stroke-dasharray="2 1"/><path d="M2 10V1M.5 3 2 1l1.500 2M4 12h9m-2-1.500 2 1.500-2 1.500" fill="none" stroke="#1f3a5f"/></svg></div>
    <div class="flex h-6 w-[156px] items-center gap-1 border-r border-[#dcdcdc] pl-1"><svg class="h-3.5 w-3.5" viewBox="0 0 14 14"><path d="M5 1.500h8v8H5z" fill="none" stroke="#1f3a5f"/><path d="M2 10V1M.5 3 2 1l1.500 2M4 12h9m-2-1.500 2 1.500-2 1.500" fill="none" stroke="#1f3a5f"/></svg>7348 × 3036px</div>
    <div class="h-6 w-[156px] border-r border-[#dcdcdc]"></div>
    <div class="flex-1"></div>
    <div class="flex h-6 items-center border-l border-[#dcdcdc] pr-1 pl-[26px]">25%
      <button aria-label="Zoom out" class="ml-1.5"><svg class="h-4 w-4" viewBox="0 0 16 16"><circle cx="8" cy="8" r="7.300" fill="#fafafa" stroke="#777"/><path d="M4 8h8" stroke="#444" stroke-width="2"/></svg></button>
      <input type="range" aria-label="Zoom" min="0" max="100" value="7" class="mx-2.5 h-4 w-[85px] appearance-none bg-transparent [&::-webkit-slider-runnable-track]:h-[3px] [&::-webkit-slider-runnable-track]:border [&::-webkit-slider-runnable-track]:border-[#d0d0d0] [&::-webkit-slider-runnable-track]:bg-[#e7e7e7] [&::-webkit-slider-thumb]:-mt-[8px] [&::-webkit-slider-thumb]:h-4 [&::-webkit-slider-thumb]:w-2.5 [&::-webkit-slider-thumb]:appearance-none [&::-webkit-slider-thumb]:bg-[#0078d7] [&::-webkit-slider-thumb]:[clip-path:polygon(0_0,100%_0,100%_75%,50%_100%,0_75%)]">
      <button aria-label="Zoom in"><svg class="h-4 w-4" viewBox="0 0 16 16"><circle cx="8" cy="8" r="7.300" fill="#fafafa" stroke="#777"/><path d="M4 8h8M8 4v8" stroke="#444" stroke-width="2"/></svg></button>
    </div>
  </footer>

  <nav aria-label="Taskbar" class="flex h-10 shrink-0 items-stretch bg-[#221f1e]">
    <button aria-label="Start" class="flex w-12 items-center justify-center"><svg class="h-4 w-4"><use href="#i-win"/></svg></button>
    <label class="flex w-[344px] items-center gap-3 border border-[#555] bg-[#333] pl-[11px]"><svg class="h-4 w-4"><use href="#i-search"/></svg><input type="text" placeholder="Type here to search" aria-label="Type here to search" class="min-w-0 flex-1 bg-transparent text-sm placeholder:text-[#c8c8c8]"></label>
    <button aria-label="Cortana" class="flex w-12 items-center justify-center"><svg class="h-4 w-4"><use href="#i-cortana"/></svg></button>
    <button aria-label="Task View" class="flex w-12 items-center justify-center"><svg class="h-4 w-4"><use href="#i-task"/></svg></button>
    <div class="apps ml-[3px] flex"></div>
    <span class="flex-1"></span>
    <div class="flex items-center">
      <div class="flex items-center gap-2">
        <svg class="h-3 w-4" viewBox="0 0 16 12"><path d="m2 9 6-6 6 6" fill="none" stroke="#fff" stroke-width="1.200"/></svg>
        <svg class="h-4 w-4" viewBox="0 0 16 16"><path d="M4 3.500h11.500v8H2.500V7M9 12v2.500M5 14.500h8M.5 1.500h4v3h-4z" fill="none" stroke="#fff"/></svg>
        <svg class="h-4 w-4" viewBox="0 0 16 16"><path d="M3 12q-4-3 0-5 1-4 5-3 3 0 4 3 4 0 4 3 0 3-3 3H4z" fill="#b0b0b0"/><path d="M4 13q-3 0-3-3 8-5 14 1 0 2-3 2z" fill="#f0f0f0"/></svg>
        <svg class="h-4 w-4" viewBox="0 0 16 16"><path d="M5 5.500h9.500v6H5M15.500 7v3M1 3v2M3 3v2M.5 5.500h3v2H.5zM2 8v4h3" fill="none" stroke="#fff"/><path d="M6 7h7v3H6z" fill="#fff"/></svg>
      </div>
      <p class="w-[72px] text-center leading-[18px] text-white">9:31 AM<br>4/26/2021</p>
      <svg class="ml-2 h-4 w-4" viewBox="0 0 16 16"><path d="M.5 1.500h15v11h-5L8 15l-2.500-2.500h-5z" fill="none" stroke="#fff"/></svg>
      <span class="ml-5 mr-1 h-10 w-px bg-[#777]"></span>
    </div>
  </nav>
</main>

<!-- right screen: course page in Edge -->
<main class="flex min-w-0 flex-1 flex-col bg-white font-['Roboto',sans-serif]">
  <header class="shrink-0 font-['Open_Sans',sans-serif]">
    <div class="flex h-[23px] items-center bg-linear-to-r from-[#03031f] via-[#190829] to-[#05052a] pl-0.5 text-xs text-white">
      <span class="h-4 w-4 bg-white text-center font-['Inter',sans-serif] text-[7px] leading-4 font-black text-[#24427e]">LRN</span>
      <h2 class="ml-[5px] flex-1">Health Insurance Portability and Accountability Act (HIPAA), HIPAA - Personal - Microsoft Edge</h2>
      <div class="flex items-center gap-9 pr-[18px]">
        <button aria-label="Minimize"><svg class="h-2.5 w-2.5" viewBox="0 0 10 10"><path d="M0 5.500h10" stroke="#fff"/></svg></button>
        <button aria-label="Restore"><svg class="h-2.5 w-2.5" viewBox="0 0 10 10"><path d="M.5 2.500h7v7h-7zM2.500 2V.5h7v7H8" fill="none" stroke="#fff"/></svg></button>
        <button aria-label="Close"><svg class="h-2.5 w-2.5" viewBox="0 0 10 10"><path d="m0 0 10 10m0-10L0 10" stroke="#fff"/></svg></button>
      </div>
    </div>
    <div class="flex h-[31px] items-center border-y border-[#2b2b2b] bg-[#111] pl-[15px] text-[15px] leading-6 whitespace-nowrap text-[#8d8d8d]">
      <svg class="mr-4 h-[15px] w-[13px] shrink-0" viewBox="0 0 13 15"><path d="M1 5.500h11v9H1zM4 5.500V3q0-2.500 2.500-2.500T9 3v2.500" fill="none" stroke="#fff" stroke-width="1.200"/><path d="M6 9h1.500v1.500H6z" fill="#fff"/></svg>
      <span class="truncate"><span class="text-white">https</span>://<span class="text-white">cognizant-lcec.course.lrn.com</span>/rev2021042502/course/templates/ajax/FluidX/FluidX2.0/app_min/index.html?aicc_sid=64f26abbf4a66c48708d9e04b40e38ab&amp;aicc_url=/app/aicc/track2a&amp;sid=50701&amp;lang=en&amp;cpath=DPP006C/en/DPP006Cm80en/&amp;course...</span>
    </div>
  </header>
  <div class="flex h-[87px] shrink-0 items-center bg-linear-to-r from-white from-10% to-[#fafafa] to-13% pr-4 pl-5 text-[21px] leading-6 shadow-[0_1px_4px_#bbb]">
    <span class="flex-1 pb-1.5 font-['Lato',sans-serif] text-[27px] leading-8 font-black text-[#0033a0]">Cognizant</span>
    <span class="pt-1 text-[#666]">Health Insurance Portability and Accountability Act (HIPAA)</span>
    <svg class="mx-2.5 mt-1 h-5 w-2.5" viewBox="0 0 10 20"><path d="m2 1 6 9-6 9" fill="none" stroke="#0033a0" stroke-width="3"/></svg>
    <span class="pt-1 text-[#222]">Results and Feedback</span>
    <button aria-label="Close course" class="mt-1 ml-3"><svg class="h-6 w-6" viewBox="0 0 24 24"><path d="m1 1 22 22m0-22L1 23" stroke="#0033a0" stroke-width="3"/></svg></button>
  </div>
  <div class="flex min-h-0 flex-1 items-start gap-14 pr-7 pl-[30px] text-[21px] leading-[29px] text-[#333]">
    <section class="flex w-[896px] shrink-0 flex-col">
      <h1 class="mt-8 text-[38px] leading-[48px]">Question 7</h1>
      <p class="mt-[21px]">Covered Entities provide audit and oversight activities of their Business Associates for various reasons including avoiding penalties. Which type of penalties can a Covered Entity face for violating the HIPAA Privacy Rule and HIPAA Security Rule?</p>
      <div class="mt-5 flex flex-col gap-2">
        <button class="rounded-md border-b-2 border-[#d6d6d6] bg-[#e5e5e5] pt-[15px] pr-10 pb-[14px] pl-[15px] text-left">Civil penalties in the form of $50,000 per violation, but no criminal penalties</button>
        <button class="rounded-md border-b-2 border-[#d6d6d6] bg-[#e5e5e5] pt-[15px] pr-10 pb-[14px] pl-[15px] text-left">Criminal penalties in the form of both fines and prison, but no civil penalties</button>
        <button class="rounded-md border-b-2 border-[#d6d6d6] bg-[#e5e5e5] pt-[15px] pr-10 pb-[14px] pl-[15px] text-left">Civil fines up to $50,000 per violation and criminal fines up to $250,000 , but no prison terms</button>
        <button class="rounded-md border-b-2 border-[#333] bg-[#4a4a4a] pt-[15px] pr-10 pb-[14px] pl-[15px] text-left text-white">Civil fines up to $50,000 per violation and criminal fines up to $250,000 , and prison terms</button>
      </div>
      <button class="mt-[22px] -mr-2 self-end rounded-md bg-[#333] px-4 py-[7px] text-[22px] font-medium text-white shadow-[0_1px_3px_#777]">Return to results</button>
    </section>
    <aside class="mt-[15px] ml-px h-[129px] flex-1 rounded-md border border-[#aaa] px-5 pt-7 text-black">
      <h2 class="text-[26px] leading-7 font-medium text-[#0a800a]">Correct</h2>
      <p class="mt-[22px]">To learn more, you may want to review <a href="#hipaa" class="text-[#2a7ab8]">HIPAA</a>.</p>
    </aside>
  </div>
  <nav aria-label="Course" class="grid h-[65px] shrink-0 grid-cols-[1fr_auto_1fr] items-center bg-[#0033a0] pr-4 pl-[11px] text-xs leading-4 text-white">
    <button class="flex flex-col gap-2 justify-self-start pt-2 text-left"><svg class="h-[23px] w-[35px]" viewBox="0 0 35 23"><path d="M0 0h10v10H0zM12 0h10v10H12zM24 0h10v10H24zM0 12.500h10v10H0zM12 12.500h10v10H12zM24 12.500h10v10H24z" fill="#fff"/></svg>Menu</button>
    <div class="flex flex-col items-center gap-1.5 pt-1 text-[11px]">
      <div class="flex items-center gap-2.5"><span class="text-xs">17 / 21</span><span class="flex h-[9px] w-[254px] rounded-full bg-[#3b74f5]"><span class="w-[81%] rounded-l-full bg-white"></span></span></div>
      <span class="pl-1">© LRN Corporation</span>
    </div>
    <div class="flex gap-8 justify-self-end pt-1.5">
      <button class="flex flex-col items-center gap-1"><svg class="h-[30px] w-[30px]" viewBox="0 0 30 30"><circle cx="15" cy="15" r="13" fill="none" stroke="#fff" stroke-width="2.500"/><path d="M11 12q0-4 4-4t4 3.500-4 4.500v3M15 21v2.500" fill="none" stroke="#fff" stroke-width="2.500"/></svg>Help</button>
      <button class="flex flex-col items-center gap-1"><svg class="h-[30px] w-5" viewBox="0 0 20 30"><path d="M17 3 5 15l12 12" fill="none" stroke="#fff" stroke-width="4"/></svg>Back</button>
      <button class="flex flex-col items-center gap-1"><svg class="h-[30px] w-5" viewBox="0 0 20 30"><path d="m3 3 12 12L3 27" fill="none" stroke="#fff" stroke-width="4"/></svg>Next</button>
    </div>
  </nav>
  <nav aria-label="Taskbar, second screen" class="flex h-10 shrink-0 items-stretch bg-[#201f1f] font-['Open_Sans',sans-serif]">
    <button aria-label="Start" class="flex w-12 items-center justify-center"><svg class="h-4 w-4"><use href="#i-win"/></svg></button>
    <button aria-label="Search" class="flex w-12 items-center justify-center"><svg class="h-4 w-4"><use href="#i-search"/></svg></button>
    <button aria-label="Cortana" class="flex w-12 items-center justify-center"><svg class="h-4 w-4"><use href="#i-cortana"/></svg></button>
    <button aria-label="Task View" class="flex w-12 items-center justify-center"><svg class="h-4 w-4"><use href="#i-task"/></svg></button>
    <div class="apps ml-[3px] flex"></div>
    <p class="ml-auto self-center pr-[5px] text-right leading-[18px] text-white">9:31 AM<br>4/26/2021</p>
  </nav>
</main>

<script>
  const colors = ['#000000', '#7f7f7f', '#880015', '#ed1c24', '#ff7f27', '#fff200', '#22b14c', '#00a2e8', '#3f48cc', '#a349a4',
    '#ffffff', '#c3c3c3', '#b97a57', '#ffaec9', '#ffc90e', '#efe4b0', '#b5e61d', '#99d9ea', '#7092be', '#c8bfe7',
    '', '', '', '', '', '', '', '', '', ''];
  document.getElementById('palette').innerHTML = colors.map(c =>
    `<button aria-label="${c || 'Empty color'}" class="h-5 w-5 border border-[#a0a0a0] p-px"><span class="block h-4 w-4" style="background:${c || '#f5f6f7'}"></span></button>`).join('');

  const apps = [['edge', 'Microsoft Edge', 1], ['folder', 'File Explorer', 0], ['store', 'Microsoft Store', 0], ['nord', 'NordVPN', 1],
    ['outlook', 'Outlook', 1], ['onenote', 'OneNote', 1], ['ij', 'IntelliJ IDEA', 1], ['paint', 'Paint', 1]];
  document.querySelectorAll('.apps').forEach(el => {
    el.innerHTML = apps.map(([id, name, open], i) =>
      `<button aria-label="${name}" class="flex w-[49px] flex-col items-center ${i === 0 ? 'bg-[#4c4a4a]' : ''}"><svg class="my-[7px] h-6 w-6"><use href="#i-${id}"/></svg><span class="h-0.5 ${i === 0 ? 'w-full' : 'w-10'} ${open ? 'bg-[#76d5f5]' : ''}"></span></button>`).join('');
  });

  // x, y: place on the canvas; pick: index of the chosen answer
  const questions = [
    { n: 1, x: 977, y: 0, pick: 2, q: 'Who is ultimately responsible for protecting PHI at our company?', a: ['The client', 'Corporate Security and Privacy teams', 'Everyone at the company', 'The people who use and access the data'] },
    { n: 2, x: 984, y: 109, pick: 0, q: 'Which of the following types of health information is covered under the HIPAA Privacy Rule?', a: ['Records of doctor–patient conversations', 'Employment records', 'Employment records that include medical information', 'A child’s elementary school records containing information about school nurse visits'] },
    { n: 3, x: 986, y: 217, pick: 3, q: 'The HIPAA Privacy Rule applies to protected health information (PHI) in which type of formats:', a: ['Electronic', 'Written', 'Oral', 'All of the above'] },
    { n: 4, x: 989, y: 324, pick: 2, q: 'What should you do if you become aware of a potential personal information data incident, such as emailing client medical claim information to the wrong client?', a: ['Notify your client – no need to inform Cognizant as only client data has been affected.', 'Email ReportSpam@cognizant.com as soon as you become aware of the data incident.', 'Email CSIRT@cognizant.com as soon as you become aware of the data incident.'] },
    { n: 5, x: 992, y: 418, pick: 0, q: 'There are three types of Covered Entities under HIPAA. Please select the answer that is NOT a Covered Entity.', a: ['Business Associates', 'Healthcare Providers', 'Health Plans', 'Healthcare Clearinghouses'] },
    { n: 6, x: 998, y: 533, pick: 1, q: 'Which entity enforces HIPAA?', a: ['Federal Bureau of Investigation (FBI)', 'U.S. Department of Health and Human Services (HHS)', 'Federal Trade Commission (FTC)', 'Health Information Technology for Economic and Clinical Health (HITECH) Act'] }
  ];
  document.getElementById('pasted').innerHTML = questions.map(b => `
    <article class="absolute w-[475px] bg-white text-[5px] leading-[7px]" style="left:${b.x}px;top:${b.y}px">
      <div class="h-1 border-b border-[#e2e2e2] bg-[#fafafa]"></div>
      <div class="flex items-start pl-1">
        <div class="w-[224px] pt-2">
          <h3 class="text-[9px] leading-[10px]">Question ${b.n}</h3>
          <p class="mt-[7px]">${b.q}</p>
          <div class="mt-[5px] flex flex-col gap-0.5">${b.a.map((t, i) => `<p class="rounded-[1px] px-1 py-1 ${i === b.pick ? 'bg-[#4a4a4a] text-white' : 'bg-[#e5e5e5]'}">${t}</p>`).join('')}</div>
        </div>
        <div class="mt-[3px] ml-[14px] h-[33px] w-[228px] rounded-[1px] border border-[#ddd] px-[5px] pt-[5px] text-black">
          <h4 class="text-[7px] leading-[9px] font-medium text-[#0a800a]">Correct</h4>
          <p class="mt-1">To learn more, you may want to review <span class="text-[#2a7ab8]">HIPAA</span>.</p>
        </div>
      </div>
    </article>`).join('');
</script>
</body>
</html>
